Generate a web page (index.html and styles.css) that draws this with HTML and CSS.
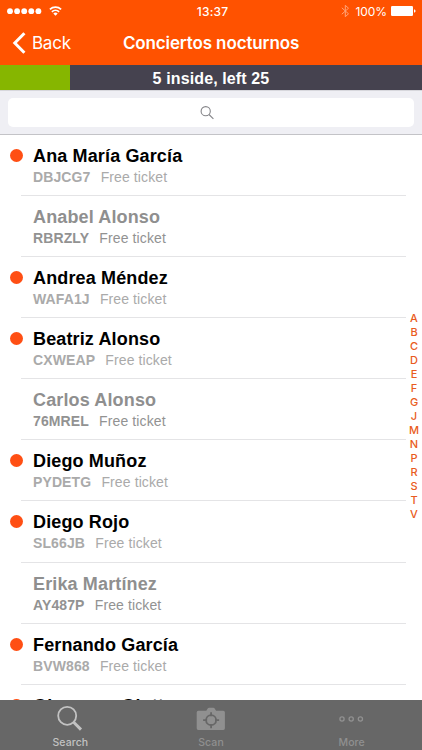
FILE: index.html
```html
<!DOCTYPE html>
<html lang="es">
<head>
<meta charset="utf-8">
<title>Conciertos nocturnos</title>
<link rel="stylesheet" href="styles.css">
</head>
<body>
<div class="app">
  <header class="top">
    <div class="status">
      <div class="signal">
        <svg width="56" height="14" viewBox="0 0 56 14" fill="#fff"><circle cx="3" cy="7.2" r="2.9"/><circle cx="10.1" cy="7.2" r="2.9"/><circle cx="17.2" cy="7.2" r="2.9"/><circle cx="24.3" cy="7.2" r="2.9"/><circle cx="31.4" cy="7.2" r="2.9"/><g fill="none" stroke="#fff" stroke-width="1.7"><path d="M42.9 5.3a8.1 8.1 0 0 1 11.2 0"/><path d="M44.9 7.8a5.2 5.2 0 0 1 7.2 0"/></g><path d="M46.3 9.5a3.2 3.2 0 0 1 4.4 0L48.5 11.8z"/></svg>
      </div>
      <span class="clock">13:37</span>
      <div class="power">
        <svg width="9" height="14" viewBox="0 0 9 14" fill="none" stroke="#ffa477" stroke-width="1"><path d="M.8 3.8 7.5 9.8 4.3 12.7V1.3L7.5 4.2.8 10.2"/></svg>
        <span class="percent">100%</span>
        <svg width="25" height="10" viewBox="0 0 25 10" fill="#fff"><rect width="22" height="10" rx="1.2"/><path d="M23 3.3q1.6.4 1.6 1.7T23 6.7z"/></svg>
      </div>
    </div>
    <nav class="nav">
      <a class="back"><svg width="14" height="22" viewBox="0 0 14 22" fill="none" stroke="#fff" stroke-width="3"><path d="M12.4 1.2 2.8 11l9.6 9.8"/></svg><span>Back</span></a>
      <h1 class="title">Conciertos nocturnos</h1>
    </nav>
  </header>
  <div class="progress"><span>5 inside, left 25</span></div>
  <div class="searchbar"><div class="field"><svg width="14" height="14" viewBox="0 0 14 14" fill="none" stroke="#858589" stroke-width="1.1"><circle cx="5.7" cy="5.2" r="4.6"/><path d="m9 8.5 4.4 4.4"/></svg></div></div>
  <main class="content">
    <ul class="list">
      <li class="row"><i class="dot"></i><div class="info"><b class="name">Ana María García</b><p><b>DBJCG7</b><span>Free ticket</span></p></div></li>
      <li class="row used"><i class="dot"></i><div class="info"><b class="name">Anabel Alonso</b><p><b>RBRZLY</b><span>Free ticket</span></p></div></li>
      <li class="row"><i class="dot"></i><div class="info"><b class="name">Andrea Méndez</b><p><b>WAFA1J</b><span>Free ticket</span></p></div></li>
      <li class="row"><i class="dot"></i><div class="info"><b class="name">Beatriz Alonso</b><p><b>CXWEAP</b><span>Free ticket</span></p></div></li>
      <li class="row used"><i class="dot"></i><div class="info"><b class="name">Carlos Alonso</b><p><b>76MREL</b><span>Free ticket</span></p></div></li>
      <li class="row"><i class="dot"></i><div class="info"><b class="name">Diego Muñoz</b><p><b>PYDETG</b><span>Free ticket</span></p></div></li>
      <li class="row"><i class="dot"></i><div class="info"><b class="name">Diego Rojo</b><p><b>SL66JB</b><span>Free ticket</span></p></div></li>
      <li class="row used"><i class="dot"></i><div class="info"><b class="name">Erika Martínez</b><p><b>AY487P</b><span>Free ticket</span></p></div></li>
      <li class="row"><i class="dot"></i><div class="info"><b class="name">Fernando García</b><p><b>BVW868</b><span>Free ticket</span></p></div></li>
      <li class="row"><i class="dot"></i><div class="info"><b class="name">Giovanna Giotto</b></div></li>
    </ul>
    <div class="index"><span>A</span><span>B</span><span>C</span><span>D</span><span>E</span><span>F</span><span>G</span><span>J</span><span>M</span><span>N</span><span>P</span><span>R</span><span>S</span><span>T</span><span>V</span></div>
  </main>
  <footer class="tabs">
    <a class="tab active"><svg width="28" height="28" viewBox="0 0 28 28" fill="none" stroke="#c2c2c2"><circle cx="11.2" cy="10.8" r="9" stroke-width="1.8"/><path d="m17.7 17.3 7.3 7.3" stroke-width="3"/></svg><span>Search</span></a>
    <a class="tab"><svg width="30" height="28" viewBox="0 0 30 28"><path d="M2.3 5.8h8l1.6-2.5q.4-.6 1.1-.6h4.4q.7 0 1.1.6l1.6 2.5h7.2q1.6 0 1.6 1.6v15.9q0 1.6-1.6 1.6h-25q-1.6 0-1.6-1.6V7.4q0-1.6 1.6-1.6z" fill="#909090"/><g fill="none" stroke="#676767" stroke-width="1.8"><circle cx="15.1" cy="15.2" r="5"/><path d="M15.1 7.2v4M15.1 19.2v4M7.1 15.2h4M19.1 15.2h4"/></g></svg><span>Scan</span></a>
    <a class="tab"><svg width="28" height="28" viewBox="0 0 28 28" fill="none" stroke="#919191" stroke-width="1.3"><circle cx="4" cy="14" r="2.1"/><circle cx="13.2" cy="14" r="2.1"/><circle cx="22.4" cy="14" r="2.1"/></svg><span>More</span></a>
  </footer>
</div>
</body>
</html>
```
FILE: styles.css
```css
* { box-sizing: border-box; }
body { margin: 0; background: #fff; font-family: "Liberation Sans", Arial, sans-serif; }
svg { display: block; flex: none; }
.app { width: 422px; height: 750px; display: flex; flex-direction: column; overflow: hidden; }
.top { height: 65px; flex: none; background: #ff5200; color: #fff; font-family: Inter, sans-serif; }
.status { height: 22px; display: grid; grid-template-columns: 1fr auto 1fr; align-items: center; padding: 0 6px 0 7px; font-size: 12px; }
.clock { font-weight: 500; letter-spacing: .2px; margin-left: 2px; }
.power { display: flex; align-items: center; justify-content: flex-end; }
.percent { margin: 0 4px 0 6px; letter-spacing: -.1px; }
.nav { height: 42px; display: grid; grid-template-columns: 70px 1fr 70px; align-items: center; padding: 0 12px; }
.back { display: flex; align-items: center; gap: 6px; font-size: 17px; letter-spacing: -.25px; }
.title { margin: 0; text-align: center; font-size: 17px; font-weight: 600; letter-spacing: -.12px; white-space: nowrap; }
.progress { height: 25px; flex: none; display: flex; align-items: center; justify-content: center; background: linear-gradient(90deg, #86b600 70.5px, #45424f 70.5px); color: #fff; font-size: 16px; font-weight: bold; letter-spacing: .12px; padding-top: 2px; }
.searchbar { height: 45px; flex: none; padding: 7px 8px 8px; background: #efeff4; border-bottom: 1px solid #c3c3c7; border-top: 1px solid #d7d7dc; }
.field { height: 29px; border-radius: 5px; background: #fff; display: flex; align-items: center; justify-content: center; padding-right: 8px; }
.content { flex: 1; min-height: 0; display: flex; overflow: hidden; }
.list { flex: 1; margin: 0; padding: 0; list-style: none; }
.row { height: 61.08px; display: flex; position: relative; padding-left: 10px; }
.row::after { content: ""; position: absolute; left: 21px; right: 0; bottom: 0; height: 1px; background: #e4e4e6; }
.dot { width: 13px; height: 13px; margin-top: 14px; border-radius: 50%; background: #ff4f14; }
.used .dot { visibility: hidden; }
.info { margin-left: 10px; padding-top: 10px; }
.name { display: block; font-size: 18px; line-height: 22px; letter-spacing: .14px; color: #000; white-space: nowrap; }
.info p { display: flex; gap: 10.2px; margin: 2px 0 0; font-size: 14px; line-height: 17px; letter-spacing: .11px; color: #aaa; }
.used .name { color: #8f8f8f; }
.used p { color: #929292; }
.index { width: 16px; padding-top: 176px; display: flex; flex-direction: column; align-items: center; font: 500 11px/14px Inter, sans-serif; color: #e95b20; }
.tabs { height: 50px; flex: none; display: grid; grid-template-columns: repeat(3, 1fr); background: #676767; }
.tab { display: flex; flex-direction: column; align-items: center; padding-top: 5px; font: 500 10.5px/12px Inter, sans-serif; color: #909090; gap: 4px; letter-spacing: .1px; }
.active { color: #c2c2c2; }
```
